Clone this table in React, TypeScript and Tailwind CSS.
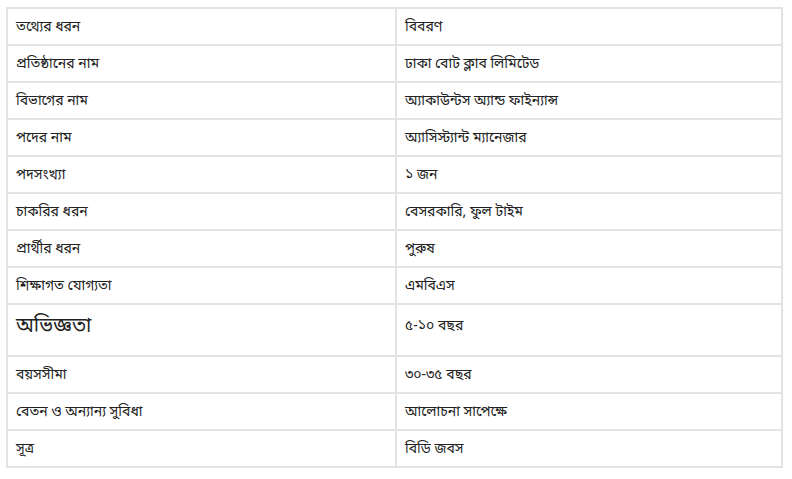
const rows: [string, string][] = [
  ['তথ্যের ধরন', 'বিবরণ'],
  ['প্রতিষ্ঠানের নাম', 'ঢাকা বোট ক্লাব লিমিটেড'],
  ['বিভাগের নাম', 'অ্যাকাউন্টস অ্যান্ড ফাইন্যান্স'],
  ['পদের নাম', 'অ্যাসিস্ট্যান্ট ম্যানেজার'],
  ['পদসংখ্যা', '১ জন'],
  ['চাকরির ধরন', 'বেসরকারি, ফুল টাইম'],
  ['প্রার্থীর ধরন', 'পুরুষ'],
  ['শিক্ষাগত যোগ্যতা', 'এমবিএস'],
  ['অভিজ্ঞতা', '৫-১০ বছর'],
  ['বয়সসীমা', '৩০-৩৫ বছর'],
  ['বেতন ও অন্যান্য সুবিধা', 'আলোচনা সাপেক্ষে'],
  ['সূত্র', 'বিডি জবস'],
]

export default function App() {
  return (
    <div
      className="w-[792px] h-[479px] bg-white pl-[6px] pt-[7px] text-[#222]"
      style={{ fontFamily: '"Noto Sans Bengali", "Noto Sans", "Liberation Sans", sans-serif' }}
    >
      <table className="w-[777px] border-collapse border-2 border-[#e3e3e3] table-fixed">
        <tbody>
          {rows.map(([label, value], i) => {
            const big = label === 'অভিজ্ঞতা'
            return (
              <tr key={i} className={big ? 'h-[52px]' : 'h-[37px]'}>
                <td className="w-[389px] border-2 border-[#e3e3e3] px-2 align-top pt-[6px]">
                  <span className={big ? 'text-[20px] leading-[32px]' : 'text-[14px] leading-[20px]'}>{label}</span>
                </td>
                <td className="border-2 border-[#e3e3e3] px-2 align-top pt-[6px]">
                  <span className={big ? 'text-[14px] leading-[32px]' : 'text-[14px] leading-[20px]'}>{value}</span>
                </td>
              </tr>
            )
          })}
        </tbody>
      </table>
    </div>
  )
}
